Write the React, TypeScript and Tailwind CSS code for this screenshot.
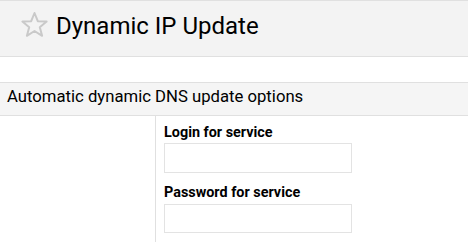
export default function App() {
  return (
    <div className="w-[468px] h-[242px] overflow-hidden bg-white font-['Roboto',sans-serif] text-black">
      <div className="border-t border-b border-[#e0e0e0] bg-[#f3f3f3] h-[57px] flex items-start pl-[20px] pt-[11px]">
        <svg width="29" height="27" viewBox="0 0 29 27" className="mt-[-1px] shrink-0">
          <polygon
            points="14.5,2 17.8,10.2 26.6,10.6 19.8,16.2 22.1,24.8 14.5,20 6.9,24.8 9.2,16.2 2.4,10.6 11.2,10.2"
            fill="none"
            stroke="#c9c9c9"
            strokeWidth="2"
            strokeLinejoin="round"
          />
        </svg>
        <h1 className="ml-[7px] text-[24px] leading-[28px] font-normal">Dynamic IP Update</h1>
      </div>

      <div className="h-[25px]" />

      <div className="border-t border-b border-[#e0e0e0] bg-[#f5f5f5] pl-[7px] pt-[2px] pb-[6px] h-[34px]">
        <span className="text-[16.7px] leading-[24px]">Automatic dynamic DNS update options</span>
      </div>

      <div className="flex h-[200px]">
        <div className="w-[156px] border-r border-[#e0e0e0] shrink-0" />
        <div className="pl-[8px] pt-[7px] flex flex-col">
          <label className="text-[14.4px] leading-[20px] font-bold">Login for service</label>
          <input className="w-[188px] h-[30px] border border-[#e3e3e3] bg-white outline-none" />
          <label className="mt-[10px] text-[14.4px] leading-[20px] font-bold">Password for service</label>
          <input type="password" className="mt-[1px] w-[188px] h-[29px] border border-[#e3e3e3] bg-white outline-none" />
        </div>
      </div>
    </div>
  );
}
